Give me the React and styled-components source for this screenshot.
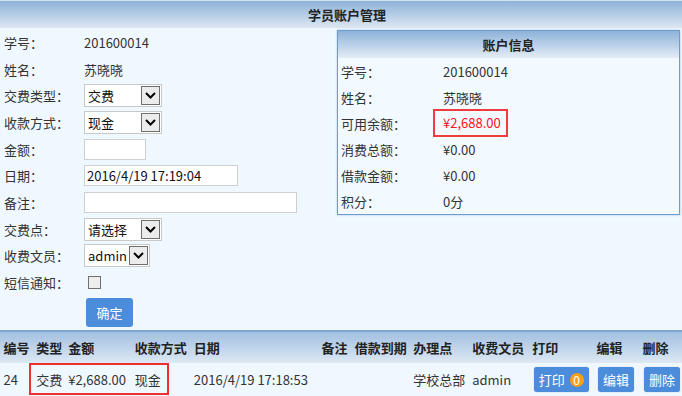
import React from "react";
import styled, { createGlobalStyle } from "styled-components";

const Global = createGlobalStyle`
  html, body { margin: 0; padding: 0; background: #f0f8ff; }
  body { font-family: "Noto Sans CJK SC", "Noto Sans", sans-serif; font-size: 13px; color: #333; }
  * { box-sizing: border-box; }
`;

const Page = styled.div`
  width: 682px;
  height: 396px;
  overflow: hidden;
  background: #f0f8ff;
`;

const TitleBar = styled.div`
  height: 28px;
  border-top: 1px solid #d4e3f2;
  background: linear-gradient(#8db2d9, #dde7f2);
  display: flex;
  align-items: center;
  justify-content: center;
  padding-left: 12px;
  font-weight: bold;
  color: #222;
  font-size: 13px;
`;

const Main = styled.div`
  display: flex;
  min-height: 302px;
`;

const Form = styled.div`
  width: 337px;
  padding-top: 1px;
  display: flex;
  flex-direction: column;
`;

const FormRow = styled.div`
  height: 26.7px;
  display: flex;
  align-items: center;
`;

const Label = styled.span`
  width: ${(p) => p.$w || 84}px;
  padding-left: ${(p) => (p.$pl == null ? 4 : p.$pl)}px;
  flex: none;
  white-space: nowrap;
`;

const Value = styled.span`
  white-space: nowrap;
  color: #333;
`;

const SelectBox = styled.div`
  width: ${(p) => p.$w}px;
  height: 23px;
  border: 1px solid #c9c9c9;
  background: #fff;
  display: flex;
  align-items: center;
  justify-content: space-between;
  padding: 0 1px 0 3px;
  color: #111;
  white-space: nowrap;
`;

const ArrowBox = styled.span`
  width: 19px;
  height: 19px;
  border: 1px solid #6f6f6f;
  background: #ececec;
  display: flex;
  align-items: center;
  justify-content: center;
  flex: none;
`;

const TextInput = styled.div`
  width: ${(p) => p.$w}px;
  height: 21px;
  border: 1px solid #cfcfcf;
  background: #fff;
  display: flex;
  align-items: center;
  padding-left: 2px;
  color: #111;
  white-space: nowrap;
`;

const CheckBox = styled.span`
  width: 13px;
  height: 13px;
  margin-left: 4px;
  border: 1px solid #707070;
  background: #eeeeee;
  display: inline-block;
`;

const SubmitRow = styled.div`
  padding-left: 86px;
  margin-top: 2px;
`;

const SubmitButton = styled.button`
  width: 47px;
  height: 29px;
  border: none;
  border-radius: 3px;
  background: #4b8cdb;
  color: #fff;
  font-family: inherit;
  font-size: 13px;
  padding: 0;
`;

const Panel = styled.div`
  width: 343px;
  margin-top: 2px;
  align-self: flex-start;
  border: 1px solid #6f9ccf;
  box-shadow: 0 0 2px rgba(110, 160, 215, 0.6);
  background: #f2f9ff;
`;

const PanelHead = styled.div`
  height: 27px;
  background: linear-gradient(#8db2d9, #e4edf6);
  display: flex;
  align-items: center;
  justify-content: center;
  font-weight: bold;
  color: #222;
`;

const PanelRow = styled.div`
  height: 26px;
  display: flex;
  align-items: center;
`;

const RedBox = styled.span`
  border: 2px solid #f03c3c;
  padding: 2px 5px 3px 8px;
  margin-left: -10px;
  color: #ff1020;
  white-space: nowrap;
`;

const Table = styled.div`
  position: relative;
`;

const Grid = styled.div`
  display: grid;
  grid-template-columns: 32.7px 32px 66.6px 59px 127.7px 33.3px 58.4px 59px 60px 64.3px 46px 43px;
  height: 33px;
  align-items: center;
  white-space: nowrap;
`;

const HeadGrid = styled(Grid)`
  border-top: 2px solid #7fa6d1;
  background: linear-gradient(#a2c0e1, #dde8f3);
  font-weight: bold;
  color: #222;
`;

const BodyGrid = styled(Grid)`
  background: #f0f8ff;
  position: relative;
`;

const Cell = styled.div`
  padding-left: 3.5px;
`;

const ActionButton = styled.span`
  display: inline-flex;
  align-items: center;
  gap: 5px;
  height: 25px;
  padding: 0 5px;
  margin-left: 1.5px;
  border-radius: 3px;
  background: #4b8cdb;
  color: #fff;
  box-shadow: 0 0 1px rgba(40, 90, 160, 0.6);
`;

const Badge = styled.span`
  width: 14px;
  height: 14px;
  border-radius: 50%;
  background: #f5a01a;
  color: #fff;
  font-size: 12px;
  display: inline-flex;
  align-items: center;
  justify-content: center;
  line-height: 1;
`;

const Mark = styled.div`
  position: absolute;
  left: 29px;
  top: 0;
  width: 140px;
  height: 32px;
  border: 2px solid #f03030;
  pointer-events: none;
`;

const Chevron = () => (
  <svg width="11" height="7" viewBox="0 0 11 7">
    <polyline points="1,1 5.5,5.5 10,1" fill="none" stroke="#000" strokeWidth="2" />
  </svg>
);

const Select = ({ w, children }) => (
  <SelectBox $w={w}>
    <span>{children}</span>
    <ArrowBox>
      <Chevron />
    </ArrowBox>
  </SelectBox>
);

const formRows = [
  ["学号：", <Value>201600014</Value>],
  ["姓名：", <Value>苏晓晓</Value>],
  ["交费类型：", <Select w={78}>交费</Select>],
  ["收款方式：", <Select w={78}>现金</Select>],
  ["金额：", <TextInput $w={62} />],
  ["日期：", <TextInput $w={154}>2016/4/19 17:19:04</TextInput>],
  ["备注：", <TextInput $w={213} />],
  ["交费点：", <Select w={78}>请选择</Select>],
  ["收费文员：", <Select w={66}>admin</Select>],
  ["短信通知：", <CheckBox />],
];

const panelRows = [
  ["学号：", "201600014"],
  ["姓名：", "苏晓晓"],
  ["可用余额：", "¥2,688.00", true],
  ["消费总额：", "¥0.00"],
  ["借款金额：", "¥0.00"],
  ["积分：", "0分"],
];

const heads = ["编号", "类型", "金额", "收款方式", "日期", "备注", "借款到期", "办理点", "收费文员", "打印", "编辑", "删除"];

export default function App() {
  return (
    <Page>
      <Global />
      <TitleBar>学员账户管理</TitleBar>
      <Main>
        <Form>
          {formRows.map(([l, c], i) => (
            <FormRow key={i}>
              <Label>{l}</Label>
              {c}
            </FormRow>
          ))}
          <SubmitRow>
            <SubmitButton>确定</SubmitButton>
          </SubmitRow>
        </Form>
        <Panel>
          <PanelHead>账户信息</PanelHead>
          {panelRows.map(([l, v, red], i) => (
            <PanelRow key={i}>
              <Label $w={105} $pl={3}>{l}</Label>
              {red ? <RedBox>{v}</RedBox> : <Value>{v}</Value>}
            </PanelRow>
          ))}
        </Panel>
      </Main>
      <Table>
        <HeadGrid>
          {heads.map((h) => (
            <Cell key={h}>{h}</Cell>
          ))}
        </HeadGrid>
        <BodyGrid>
          <Cell>24</Cell>
          <Cell>交费</Cell>
          <Cell>¥2,688.00</Cell>
          <Cell>现金</Cell>
          <Cell>2016/4/19 17:18:53</Cell>
          <Cell />
          <Cell />
          <Cell>学校总部</Cell>
          <Cell>admin</Cell>
          <Cell>
            <ActionButton>
              打印<Badge>0</Badge>
            </ActionButton>
          </Cell>
          <Cell>
            <ActionButton>编辑</ActionButton>
          </Cell>
          <Cell>
            <ActionButton>删除</ActionButton>
          </Cell>
          <Mark />
        </BodyGrid>
      </Table>
    </Page>
  );
}
